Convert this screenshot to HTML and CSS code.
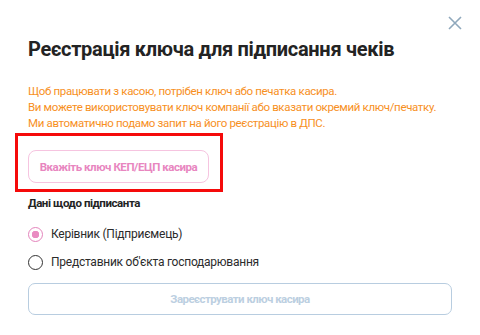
FILE: index.html
```html
<!DOCTYPE html>
<html lang="uk">
<head>
  <meta charset="UTF-8">
  <title>Реєстрація ключа</title>
  <link rel="stylesheet" href="styles.css">
</head>
<body>

  <div class="modal">
    <button class="close" aria-label="Закрити">
      <svg width="14" height="14" viewBox="0 0 14 14">
        <path d="M1 1 L13 13 M13 1 L1 13" stroke="#8fa8bc" stroke-width="1.6" fill="none" />
      </svg>
    </button>

    <h1 class="title">Реєстрація ключа для підписання чеків</h1>

    <p class="notice">
      Щоб працювати з касою, потрібен ключ або печатка касира.<br>
      Ви можете використовувати ключ компанії або вказати окремий ключ/печатку.<br>
      Ми автоматично подамо запит на його реєстрацію в ДПС.
    </p>

    <div class="highlight">
      <button class="key-btn">Вкажіть ключ КЕП/ЕЦП касира</button>
    </div>

    <div class="section-label">Дані щодо підписанта</div>

    <label class="radio first">
      <input type="radio" name="signer" checked>
      <span>Керівник (Підприємець)</span>
    </label>
    <label class="radio">
      <input type="radio" name="signer">
      <span>Представник об'єкта господарювання</span>
    </label>

    <button class="submit" disabled>Зареєструвати ключ касира</button>
  </div>

</body>
</html>
```

FILE: styles.css
```css
body { margin: 0; background: #fff; font-family: Roboto, "Liberation Sans", sans-serif; }

.modal {
  position: relative;
  width: 480px;
  height: 335px;
  box-sizing: border-box;
  padding: 37px 28px 0 28px;
}

.close {
  position: absolute;
  top: 16px;
  left: 448px;
  width: 14px;
  height: 14px;
  padding: 0;
  border: none;
  background: none;
  cursor: pointer;
}
.close svg { display: block; }

.title {
  margin: 0;
  font-size: 20px;
  line-height: 24px;
  font-weight: 700;
  letter-spacing: -0.3px;
  color: #232323;
}

.notice {
  margin: 22px 0 0 0;
  font-size: 11.5px;
  line-height: 16px;
  letter-spacing: -0.35px;
  white-space: nowrap;
  color: #f7901e;
}

.highlight {
  width: fit-content;
  margin: 2px 0 0 -13px;
  padding: 14px 11px 6px 10px;
  border: 3px solid #f50a0a;
}

.key-btn {
  display: block;
  width: 181px;
  height: 33px;
  padding: 0;
  border: 1px solid #f6c4e0;
  border-radius: 8px;
  background: #fff;
  color: #e886bf;
  font-family: inherit;
  font-size: 11.5px;
  font-weight: 700;
  letter-spacing: -0.45px;
  white-space: nowrap;
}

.section-label {
  margin-top: 3px;
  font-size: 11.5px;
  line-height: 16px;
  font-weight: 700;
  letter-spacing: -0.43px;
  color: #232323;
}

.radio {
  display: flex;
  align-items: center;
  gap: 8px;
  height: 20px;
  margin-top: 8px;
  font-size: 12px;
  letter-spacing: -0.25px;
  color: #2b2b2b;
}
.radio.first { margin-top: 13px; }

.radio input {
  appearance: none;
  margin: 0;
  width: 15px;
  height: 15px;
  border: 1.5px solid #333;
  border-radius: 50%;
  box-sizing: border-box;
}
.radio input:checked {
  border-color: #e484bc;
  background: radial-gradient(circle, #e98cc2 0 3.5px, #fff 4px);
}

.submit {
  display: block;
  width: 424px;
  height: 32px;
  padding: 0;
  margin-top: 11px;
  border: 1px solid #b8cde0;
  border-radius: 7px;
  background: #fff;
  color: #bccfe1;
  font-family: inherit;
  font-size: 11.5px;
  font-weight: 700;
  letter-spacing: -0.55px;
}
```
